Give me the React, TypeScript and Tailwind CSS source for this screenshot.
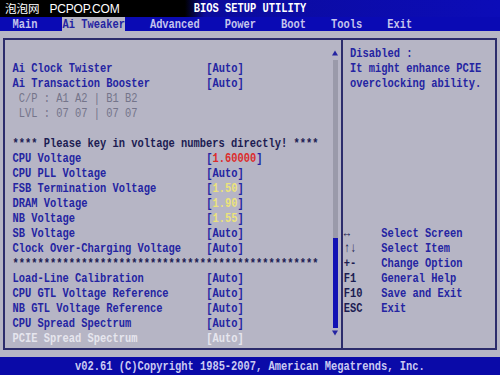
const MONO = "font-['Liberation_Mono','DejaVu_Sans_Mono',monospace] font-bold text-[10.4167px] leading-none";

type Item = {
  label: string;
  value?: string;
  tone?: "blue" | "gray" | "navy" | "off";
  num?: "red" | "yellow";
};

const items: Item[] = [
  { label: "" },
  { label: "Ai Clock Twister", value: "Auto" },
  { label: "Ai Transaction Booster", value: "Auto" },
  { label: " C/P : A1 A2 | B1 B2", tone: "gray" },
  { label: " LVL : 07 07 | 07 07", tone: "gray" },
  { label: "" },
  { label: "**** Please key in voltage numbers directly! ****", tone: "navy" },
  { label: "CPU Voltage", value: "1.60000", num: "red" },
  { label: "CPU PLL Voltage", value: "Auto" },
  { label: "FSB Termination Voltage", value: "1.50", num: "yellow" },
  { label: "DRAM Voltage", value: "1.90", num: "yellow" },
  { label: "NB Voltage", value: "1.55", num: "yellow" },
  { label: "SB Voltage", value: "Auto" },
  { label: "Clock Over-Charging Voltage", value: "Auto" },
  { label: "*************************************************", tone: "navy" },
  { label: "Load-Line Calibration", value: "Auto" },
  { label: "CPU GTL Voltage Reference", value: "Auto" },
  { label: "NB GTL Voltage Reference", value: "Auto" },
  { label: "CPU Spread Spectrum", value: "Auto" },
  { label: "PCIE Spread Spectrum", value: "Auto", tone: "off" },
];

const keys = [
  ["\u2194", "Select Screen"],
  ["\u2191\u2193", "Select Item"],
  ["+-", "Change Option"],
  ["F1", "General Help"],
  ["F10", "Save and Exit"],
  ["ESC", "Exit"],
];

const toneClass = {
  blue: "text-[#2424a2]",
  gray: "text-[#74748a] font-normal",
  navy: "text-[#1c1c52]",
  off: "text-[#e6e6ee]",
};

function SettingRow({ item }: { item: Item }) {
  const tone = item.tone ?? "blue";
  return (
    <div className="h-[15px] flex items-center whitespace-pre scale-y-[1.3]">
      <span className={`w-[193.75px] shrink-0 ${toneClass[tone]}`}>{item.label}</span>
      {item.value && (
        <span className={toneClass[tone]}>
          [
          <span
            className={
              item.num === "red"
                ? "text-[#dd2c2c]"
                : item.num === "yellow"
                  ? "text-[#ece37a]"
                  : ""
            }
          >
            {item.value}
          </span>
          ]
        </span>
      )}
    </div>
  );
}

function ScrollBar() {
  return (
    <div className="w-[6px] flex flex-col items-center">
      <div className="h-[14.5px] flex items-center">
        <svg width="6" height="6" viewBox="0 0 6 6">
          <polygon points="3,0.5 6,5.5 0,5.5" fill="#2424a2" />
        </svg>
      </div>
      <div className="h-[178px] w-[5px] bg-[#9a9aaa]" />
      <div className="h-[90px] w-[5px] bg-[#1212b4]" />
      <div className="h-[17.5px] flex items-start pt-[2px]">
        <svg width="6" height="6" viewBox="0 0 6 6">
          <polygon points="0,0.5 6,0.5 3,5.5" fill="#2424a2" />
        </svg>
      </div>
    </div>
  );
}

export default function App() {
  return (
    <div className={`w-[500px] h-[375px] flex flex-col overflow-hidden bg-[#b6b5c5] ${MONO}`}>
      {/* title row */}
      <div className="h-[17px] flex items-center bg-[linear-gradient(to_right,#000_0%,#000_37%,#0b0b9c_41%,#0c0cb8_100%)]">
        <div className="w-[193.75px] shrink-0 pl-[5px] flex items-center gap-[10px] font-normal text-white">
          <span className="font-['Noto_Sans_CJK_SC',sans-serif] text-[11.5px] leading-none">泡泡网</span>
          <span className="font-['Liberation_Sans',sans-serif] text-[12px] leading-none tracking-[-0.2px]">PCPOP.COM</span>
        </div>
        <span className="text-white scale-y-[1.3] whitespace-pre">BIOS SETUP UTILITY</span>
      </div>

      {/* menu row */}
      <div className="h-[14px] flex items-stretch bg-[#0a0ab4] text-[#c4c4ec] whitespace-pre">
        <span className="flex items-center"><span className="scale-y-[1.3]">{"  Main    "}</span></span>
        <span className="flex items-center bg-[#b6b5c5] text-[#2424a2]"><span className="scale-y-[1.3]">Ai Tweaker</span></span>
        <span className="flex items-center">
          <span className="scale-y-[1.3]">{"    Advanced    Power    Boot    Tools    Exit"}</span>
        </span>
      </div>

      {/* body */}
      <div className="flex-1 pt-[7px] pb-[7px] pl-[3px] pr-[3px]">
        <div className="h-full border-2 border-[#2c2c6c] flex">
          <div className="w-[336px] shrink-0 flex pt-[5.5px] pl-[7.5px] pr-[3px]">
            <div className="flex-1 flex flex-col">
              {items.map((item, i) => (
                <SettingRow key={i} item={item} />
              ))}
            </div>
            <ScrollBar />
          </div>
          <div className="w-[2px] bg-[#2c2c6c]" />
          <div className="flex-1 flex flex-col pt-[5.5px] pl-[0.75px] text-[#2424a2] whitespace-pre">
            <div className="h-[15px] flex items-center pl-[6.25px] scale-y-[1.3]">Disabled :</div>
            <div className="h-[15px] flex items-center pl-[6.25px] scale-y-[1.3]">It might enhance PCIE</div>
            <div className="h-[15px] flex items-center pl-[6.25px] scale-y-[1.3]">overclocking ability.</div>
            <div className="h-[135px]" />
            {keys.map(([k, d]) => (
              <div key={d} className="h-[15px] flex items-center scale-y-[1.3]">
                <span className="w-[37.5px] shrink-0 text-[#1c1c52]">{k}</span>
                <span>{d}</span>
              </div>
            ))}
          </div>
        </div>
      </div>

      {/* footer */}
      <div className="h-[18px] flex items-center pl-[75px] bg-[#0a0aa8] text-[#cacaf2] whitespace-pre">
        <span className="scale-y-[1.3]">v02.61 (C)Copyright 1985-2007, American Megatrends, Inc.</span>
      </div>
    </div>
  );
}
